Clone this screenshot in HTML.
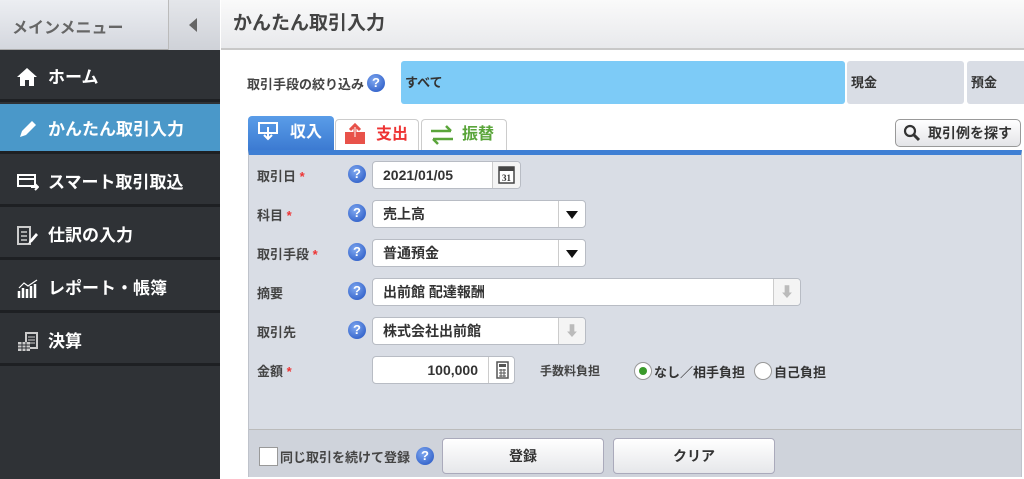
<!DOCTYPE html>
<html><head><meta charset="utf-8"><style>
*{box-sizing:border-box;margin:0;padding:0}
body{width:1024px;height:479px;overflow:hidden;background:#fff;font-family:"Liberation Sans","Noto Sans CJK JP",sans-serif;position:relative;color:#333}
.abs{position:absolute}
#side{left:0;top:0;width:220px;height:479px;background:#2f3236}
#shead{left:0;top:0;width:220px;height:50px;background:linear-gradient(#eceef2,#d4d7de);border-bottom:1px solid #aaa}
.mi{position:absolute;left:0;width:220px;height:50px;border-bottom:3px solid #1e2023;color:#fff;font-weight:bold;font-size:17px;line-height:52px;padding-left:48px}
.mi.act{background:#4a98c9}
#mhead{left:221px;top:0;width:803px;height:50px;background:linear-gradient(#fafafa,#e8e9ec);border-bottom:2px solid #c8c8c8;font-size:19px;font-weight:bold;color:#444;line-height:48px;padding-left:12px}
.q{position:absolute;width:18px;height:18px;border-radius:50%;background:radial-gradient(circle at 40% 35%,#7fa8f0,#1f50c0);color:#fff;font-size:13px;font-weight:bold;text-align:center;line-height:18px}
.inp{position:absolute;background:#fff;border:1px solid #b8bcc4;border-radius:4px;height:28px;font-size:14px;line-height:26px;padding-left:10px;color:#333;font-weight:bold}
.lbl{position:absolute;left:257px;font-size:13px;font-weight:bold;color:#444}
.star{color:#e33}
.sep{position:absolute;top:0;right:0;height:26px;border-left:1px solid #ccc;background:#f4f4f4;border-radius:0 4px 4px 0}
.btn{position:absolute;top:438px;height:36px;background:linear-gradient(#fff,#e6e7ea);border:1px solid #aab;border-radius:4px;text-align:center;line-height:34px;font-size:14px;font-weight:bold;color:#333}
</style></head><body>
<div id="side" class="abs"></div>
<div id="shead" class="abs">
<div class="abs" style="left:12px;top:14px;font-size:16px;color:#666;font-weight:bold">メインメニュー</div>
<div class="abs" style="left:168px;top:0;width:52px;height:50px;border-left:1px solid #bbb;background:linear-gradient(#e4e6ea,#cfd2d8)"></div>
<div class="abs" style="left:189px;top:18px;width:0;height:0;border-top:7px solid transparent;border-bottom:7px solid transparent;border-right:8px solid #666"></div>
</div>
<div class="mi" style="top:52px">ホーム</div>
<div class="mi act" style="top:104px">かんたん取引入力</div>
<div class="mi" style="top:157px">スマート取引取込</div>
<div class="mi" style="top:210px">仕訳の入力</div>
<div class="mi" style="top:263px">レポート・帳簿</div>
<div class="mi" style="top:316px">決算</div>
<svg class="abs" style="left:16px;top:66px" width="22" height="22" viewBox="0 0 22 22"><path d="M11 2L1 11h3v9h5v-6h4v6h5v-9h3z" fill="#fff"/></svg>
<svg class="abs" style="left:17px;top:120px" width="22" height="20" viewBox="0 0 22 20"><path d="M3 17l2-6L15 1l4 4L9 15z" fill="#fff"/></svg>
<svg class="abs" style="left:17px;top:173px" width="22" height="20" viewBox="0 0 22 20"><rect x="1" y="2" width="17" height="11" fill="none" stroke="#fff" stroke-width="2"/><path d="M1 6h17" stroke="#fff" stroke-width="2"/><path d="M14 14h7M18 11l3 3-3 3" stroke="#fff" stroke-width="2" fill="none"/></svg>
<svg class="abs" style="left:17px;top:226px" width="22" height="20" viewBox="0 0 22 20"><rect x="1" y="1" width="12" height="17" fill="none" stroke="#ccc" stroke-width="2"/><path d="M4 6h6M4 10h6M4 14h6" stroke="#ccc" stroke-width="1.5"/><path d="M11 18l2-4 6-7 2 2-6 7z" fill="#fff"/></svg>
<svg class="abs" style="left:17px;top:279px" width="22" height="20" viewBox="0 0 22 20"><path d="M2 19V12M6 19V9M10 19V10M14 19V7M18 19V5" stroke="#fff" stroke-width="2.5"/><path d="M2 9l5-5 4 3 9-6" stroke="#fff" stroke-width="1.2" fill="none"/></svg>
<svg class="abs" style="left:17px;top:332px" width="22" height="20" viewBox="0 0 22 20"><rect x="9" y="1" width="11" height="15" fill="none" stroke="#ccc" stroke-width="2"/><path d="M11 5h7M11 8h7M11 11h7" stroke="#ccc"/><rect x="1" y="10" width="12" height="9" fill="#ccc"/><path d="M1 13h12M1 16h12M5 10v9M9 10v9" stroke="#2f3236"/></svg>

<div id="mhead" class="abs">かんたん取引入力</div>
<div class="abs" style="left:247px;top:74px;font-size:13px;font-weight:bold;color:#444">取引手段の絞り込み</div>
<div class="q" style="left:367px;top:74px">?</div>
<div class="abs" style="left:401px;top:61px;width:444px;height:43px;background:#7dcbf7;border-radius:3px;font-size:13px;font-weight:bold;line-height:43px;padding-left:4px">すべて</div>
<div class="abs" style="left:847px;top:61px;width:117px;height:43px;background:#d9dde5;border-radius:3px;font-size:13px;font-weight:bold;line-height:43px;padding-left:4px">現金</div>
<div class="abs" style="left:967px;top:61px;width:60px;height:43px;background:#d9dde5;border-radius:3px;font-size:13px;font-weight:bold;line-height:43px;padding-left:4px">預金</div>

<div class="abs" style="left:248px;top:116px;width:86px;height:36px;background:linear-gradient(#5a9de8,#3a78d0);border-radius:4px 4px 0 0;color:#fff;font-weight:bold;font-size:16px;line-height:34px;padding-left:42px">収入</div>
<svg class="abs" style="left:257px;top:121px" width="22" height="20" viewBox="0 0 22 20"><rect x="2" y="2" width="18" height="10" fill="none" stroke="#fff" stroke-width="2"/><path d="M11 6v12M7 14l4 4 4-4" stroke="#fff" stroke-width="2" fill="none"/></svg>
<div class="abs" style="left:335px;top:119px;width:84px;height:32px;background:#fff;border:1px solid #ccc;border-bottom:none;border-radius:4px 4px 0 0;color:#e33;font-weight:bold;font-size:16px;line-height:30px;padding-left:40px">支出</div>
<svg class="abs" style="left:343px;top:122px" width="24" height="24" viewBox="0 0 24 24"><rect x="2" y="10" width="20" height="12" fill="#e8524a"/><path d="M12 3v12M7 8l5-5 5 5" stroke="#e8524a" stroke-width="3" fill="none"/><path d="M12 5v10" stroke="#fff" stroke-width="1"/></svg>
<div class="abs" style="left:421px;top:119px;width:86px;height:32px;background:#fff;border:1px solid #ccc;border-bottom:none;border-radius:4px 4px 0 0;color:#5aa53a;font-weight:bold;font-size:16px;line-height:30px;padding-left:40px">振替</div>
<svg class="abs" style="left:429px;top:125px" width="26" height="20" viewBox="0 0 26 20"><path d="M2 6h20M17 1l5 5M24 14H4M9 19l-5-5" stroke="#5aa53a" stroke-width="2.5" fill="none"/></svg>
<div class="abs" style="left:895px;top:119px;width:126px;height:28px;background:linear-gradient(#fff,#e4e5e8);border:1px solid #999;border-radius:5px;font-size:14px;font-weight:bold;line-height:26px;padding-left:32px;color:#333">取引例を探す</div>
<svg class="abs" style="left:903px;top:124px" width="18" height="18" viewBox="0 0 18 18"><circle cx="7" cy="7" r="5" fill="none" stroke="#333" stroke-width="2.2"/><path d="M11 11l5 5" stroke="#333" stroke-width="3"/></svg>

<div class="abs" style="left:248px;top:150px;width:774px;height:327px;background:#d9dde5;border:1px solid #bfc3cb;border-top:5px solid #3f7fd4"></div>
<div class="abs" style="left:249px;top:429px;width:772px;height:48px;background:#cfd3db;border-top:1px solid #bbb"></div>

<div class="lbl" style="top:166px">取引日 <span class="star">*</span></div>
<div class="q" style="left:348px;top:165px">?</div>
<div class="inp" style="left:372px;top:161px;width:149px">2021/01/05<div class="sep" style="width:28px"><svg width="27" height="26" viewBox="0 0 27 26"><rect x="6" y="5" width="15" height="16" fill="#fff" stroke="#444" stroke-width="1.5"/><rect x="6" y="5" width="15" height="4" fill="#444"/><text x="13.5" y="19" font-size="9" font-weight="bold" text-anchor="middle" fill="#333" font-family="Liberation Serif">31</text></svg></div></div>

<div class="lbl" style="top:205px">科目 <span class="star">*</span></div>
<div class="q" style="left:348px;top:204px">?</div>
<div class="inp" style="left:372px;top:200px;width:214px">売上高<div class="sep" style="width:27px;background:#fff"><div style="margin:10px 0 0 7px;width:0;height:0;border-left:6px solid transparent;border-right:6px solid transparent;border-top:8px solid #111"></div></div></div>

<div class="lbl" style="top:244px">取引手段 <span class="star">*</span></div>
<div class="q" style="left:348px;top:243px">?</div>
<div class="inp" style="left:372px;top:239px;width:214px">普通預金<div class="sep" style="width:27px;background:#fff"><div style="margin:10px 0 0 7px;width:0;height:0;border-left:6px solid transparent;border-right:6px solid transparent;border-top:8px solid #111"></div></div></div>

<div class="lbl" style="top:283px">摘要</div>
<div class="q" style="left:348px;top:282px">?</div>
<div class="inp" style="left:372px;top:278px;width:429px">出前館 配達報酬<div class="sep" style="width:27px;color:#bbb;text-align:center;font-weight:bold">⬇</div></div>

<div class="lbl" style="top:322px">取引先</div>
<div class="q" style="left:348px;top:321px">?</div>
<div class="inp" style="left:372px;top:317px;width:214px">株式会社出前館<div class="sep" style="width:27px;color:#bbb;text-align:center;font-weight:bold">⬇</div></div>

<div class="lbl" style="top:361px">金額 <span class="star">*</span></div>
<div class="inp" style="left:372px;top:356px;width:143px;text-align:right;padding-right:36px">100,000<div class="sep" style="width:26px;background:#fff"><svg width="26" height="26" viewBox="0 0 26 26"><rect x="8" y="5" width="11" height="16" fill="none" stroke="#555" stroke-width="1.5"/><rect x="10" y="7" width="7" height="3" fill="#555"/><path d="M10 13h7M10 16h7M10 19h7M12 12v8M15 12v8" stroke="#555"/></svg></div></div>
<div class="abs" style="left:540px;top:362px;font-size:12px;font-weight:bold;color:#444">手数料負担</div>
<div class="abs" style="left:634px;top:362px;width:18px;height:18px;border-radius:50%;background:#fff;border:1px solid #999"><div style="margin:4px;width:8px;height:8px;border-radius:50%;background:#3a9a2a"></div></div>
<div class="abs" style="left:654px;top:362px;font-size:13px;font-weight:bold;color:#333">なし／相手負担</div>
<div class="abs" style="left:754px;top:362px;width:18px;height:18px;border-radius:50%;background:#fff;border:1px solid #999"></div>
<div class="abs" style="left:774px;top:362px;font-size:13px;font-weight:bold;color:#333">自己負担</div>

<div class="abs" style="left:259px;top:447px;width:19px;height:19px;background:#fff;border:1px solid #999"></div>
<div class="abs" style="left:280px;top:447px;font-size:13px;font-weight:bold;color:#444">同じ取引を続けて登録</div>
<div class="q" style="left:416px;top:447px">?</div>
<div class="btn" style="left:442px;width:162px">登録</div>
<div class="btn" style="left:613px;width:162px">クリア</div>
</body></html>
